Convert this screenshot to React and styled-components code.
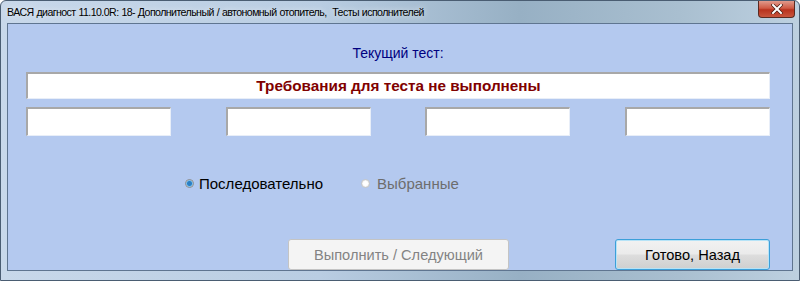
import React from 'react'
import styled, { createGlobalStyle } from 'styled-components'

const Global = createGlobalStyle`
  html, body { margin: 0; padding: 0; background: #fff; }
  #root { width: 800px; height: 281px; }
`

const Window = styled.div`
  width: 800px;
  height: 281px;
  box-sizing: border-box;
  display: flex;
  flex-direction: column;
  border: 1px solid #4a5d72;
  border-radius: 6px 6px 0 0;
  background: linear-gradient(90deg, #c8d8ea 0%, #b9cde2 40%, #97b0c4 65%, #a9bfd0 85%, #bdd0e0 100%);
  padding: 0 6px 9px 6px;
`

const TitleBar = styled.div`
  height: 22px;
  display: flex;
  align-items: center;
  justify-content: space-between;
`

const Title = styled.span`
  font-family: "Liberation Sans", Arial, sans-serif;
  font-size: 10.6px;
  letter-spacing: -0.57px;
  word-spacing: 0.5px;
  color: #000;
  white-space: pre;
  text-shadow: 0 0 6px rgba(255, 255, 255, 0.8);
`

const CloseButton = styled.div`
  width: 37px;
  height: 17px;
  margin-top: -5px;
  margin-right: -2px;
  box-sizing: border-box;
  border: 1px solid #5a2a22;
  border-top: none;
  border-radius: 0 0 4px 4px;
  background: linear-gradient(180deg, #e09a8c 0%, #cf5a45 45%, #b8321e 55%, #c8553e 100%);
  display: flex;
  align-items: center;
  justify-content: center;
`

const Client = styled.div`
  flex: 1;
  box-sizing: border-box;
  border: 1px solid #5f7590;
  background: #b4c9ef;
  display: flex;
  flex-direction: column;
  padding: 0 22px 0 18px;
`

const Heading = styled.div`
  margin-top: 21px;
  text-align: center;
  font-family: "Liberation Sans", Arial, sans-serif;
  font-size: 14px;
  line-height: 16px;
  color: #000080;
`

const Field = styled.div`
  box-sizing: border-box;
  background: #fff;
  border-style: solid;
  border-width: 2px 1px 1px 2px;
  border-color: #a8a8a8 #e8eef8 #e8eef8 #a8a8a8;
  height: ${p => p.$h}px;
  width: ${p => (p.$w ? `${p.$w}px` : 'auto')};
  margin-top: ${p => p.$mt || 0}px;
  display: flex;
  align-items: center;
  justify-content: center;
`

const Status = styled.span`
  font-family: "Liberation Sans", Arial, sans-serif;
  font-weight: bold;
  font-size: 15.3px;
  color: #800000;
`

const FieldRow = styled.div`
  margin-top: 8px;
  display: flex;
  justify-content: space-between;
`

const RadioRow = styled.div`
  margin-top: 39px;
  padding-left: 159px;
  display: flex;
  align-items: center;
  gap: 38px;
`

const RadioItem = styled.label`
  display: flex;
  align-items: center;
  gap: ${p => (p.$disabled ? 7 : 5)}px;
  font-family: "Liberation Sans", Arial, sans-serif;
  font-size: 15px;
  color: ${p => (p.$disabled ? '#6d6d6d' : '#000')};
`

const RadioDot = styled.span`
  width: 9px;
  height: 9px;
  border-radius: 50%;
  box-sizing: border-box;
  border: 1px solid ${p => (p.$disabled ? '#c8c8c8' : '#8a8a8a')};
  background: ${p =>
    p.$checked
      ? 'radial-gradient(circle, #2a7fc4 0 2px, #7cc0ee 3px, #f4f4f4 4px)'
      : 'radial-gradient(circle, #ffffff 0 2px, #e4e4e4 4px)'};
`

const ButtonRow = styled.div`
  margin-top: auto;
  display: flex;
  justify-content: flex-end;
  gap: 106px;
`

const Button = styled.div`
  box-sizing: border-box;
  width: ${p => p.$w}px;
  height: 31px;
  display: flex;
  align-items: center;
  justify-content: center;
  font-family: "Liberation Sans", Arial, sans-serif;
  font-size: 14.6px;
  border-radius: 3px;
  color: ${p => (p.$disabled ? '#838383' : '#000')};
  border: 1px solid ${p => (p.$default ? '#3c9fd9' : '#c4c4c4')};
  box-shadow: ${p => (p.$default ? 'inset 0 0 0 1px #b6e3f7' : 'none')};
  background: ${p =>
    p.$disabled
      ? '#f4f4f4'
      : 'linear-gradient(180deg, #f2f2f2 0%, #ebebeb 48%, #dddddd 52%, #cfcfcf 100%)'};
`

export default function App() {
  return (
    <>
      <Global />
      <Window>
        <TitleBar>
          <Title>ВАСЯ диагност 11.10.0R: 18- Дополнительный / автономный отопитель,  Тесты исполнителей</Title>
          <CloseButton>
            <svg width="12" height="10" viewBox="0 0 12 10">
              <path d="M2 1 L10 9 M10 1 L2 9" stroke="#4a1a10" strokeWidth="3.4" strokeLinecap="square" />
              <path d="M2 1 L10 9 M10 1 L2 9" stroke="#fff" strokeWidth="2" strokeLinecap="square" />
            </svg>
          </CloseButton>
        </TitleBar>
        <Client>
          <Heading>Текущий тест:</Heading>
          <Field $h={27} $mt={11}>
            <Status>Требования для теста не выполнены</Status>
          </Field>
          <FieldRow>
            <Field $h={29} $w={145} />
            <Field $h={29} $w={145} />
            <Field $h={29} $w={145} />
            <Field $h={29} $w={145} />
          </FieldRow>
          <RadioRow>
            <RadioItem>
              <RadioDot $checked />
              Последовательно
            </RadioItem>
            <RadioItem $disabled>
              <RadioDot $disabled />
              Выбранные
            </RadioItem>
          </RadioRow>
          <ButtonRow>
            <Button $w={221} $disabled>Выполнить / Следующий</Button>
            <Button $w={155} $default>Готово, Назад</Button>
          </ButtonRow>
        </Client>
      </Window>
    </>
  )
}
